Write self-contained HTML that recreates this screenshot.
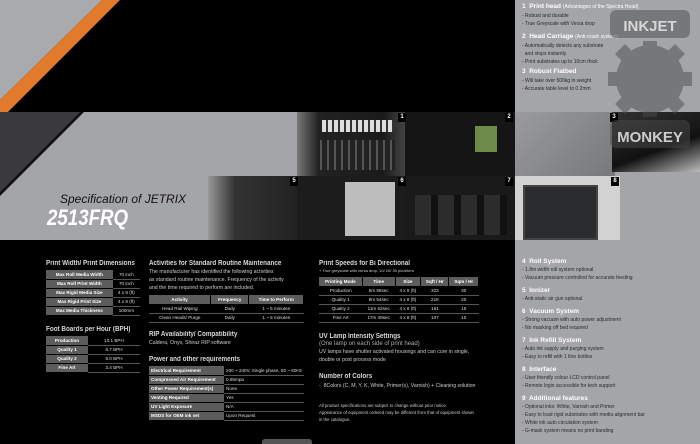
<!DOCTYPE html>
<html><head><meta charset="utf-8"><style>
*{margin:0;padding:0;box-sizing:border-box}
body{width:700px;height:444px;overflow:hidden;background:#000;font-family:"Liberation Sans",sans-serif;position:relative;color:#ddd}
.a{position:absolute}
.t{position:absolute;font-weight:bold;color:#d8d8d8;font-size:7px;white-space:nowrap;transform:scaleX(.9);transform-origin:left}
.s{position:absolute;font-size:5.2px;color:#ccc;white-space:nowrap;line-height:8px}
table{position:absolute;border-collapse:collapse;font-size:4.6px;color:#ddd}
td{height:9px;text-align:center;border-bottom:1px solid #555;padding:0 2px;white-space:nowrap}
td.l{background:#5c5c5c;color:#fff;font-weight:bold;border-bottom:1px solid #000}
th{background:#5c5c5c;color:#fff;font-weight:bold;height:9px;border-right:1px solid #000;padding:0 2px}
.r{position:absolute;left:522px;font-size:5px;color:#2a2a2a;white-space:nowrap;line-height:8px}
.rh{position:absolute;left:522px;font-size:6.5px;color:#fff;font-weight:bold;white-space:nowrap}
.rh span{font-weight:normal;font-size:5px}
.n{position:absolute;background:#000;color:#fff;font-size:6px;font-weight:bold;width:8px;height:9px;text-align:center;line-height:9px}
</style></head><body>
<svg class="a" style="left:0;top:0" width="515" height="240">
<polygon points="0,0 102,0 0,100" fill="#a9aaae"/>
<polygon points="102,0 120,0 8,112 0,112 0,100" fill="#e27a2c"/>
<rect x="0" y="112" width="515" height="128" fill="#a4a5a9"/>
<polygon points="0,112 80,112 0,192" fill="#3a3a3c"/>
<polygon points="80,112 84,112 0,196 0,192" fill="#111"/>
</svg>
<div class="a" style="left:297px;top:112px;width:108px;height:64px;background:linear-gradient(90deg,#777,#222 20%,#1a1a1a 80%,#444)"></div>
<div class="a" style="left:322px;top:120px;width:72px;height:12px;background:repeating-linear-gradient(90deg,#ddd 0 4px,#333 4px 6px)"></div>
<div class="a" style="left:320px;top:140px;width:75px;height:30px;background:repeating-linear-gradient(90deg,#555 0 2px,#222 2px 7px)"></div>
<div class="a" style="left:405px;top:112px;width:110px;height:64px;background:#151515"></div>
<div class="a" style="left:475px;top:126px;width:22px;height:26px;background:#6e8a4a"></div>
<div class="a" style="left:208px;top:176px;width:89px;height:64px;background:linear-gradient(90deg,#999,#333 30%,#222)"></div>
<div class="a" style="left:297px;top:176px;width:108px;height:64px;background:#1c1c1c"></div>
<div class="a" style="left:345px;top:182px;width:50px;height:54px;background:#bdbdbd"></div>
<div class="a" style="left:405px;top:176px;width:110px;height:64px;background:#1a1a1a"></div>
<div class="a" style="left:415px;top:195px;width:92px;height:40px;background:repeating-linear-gradient(90deg,#2c2c2c 0 16px,#111 16px 23px)"></div>
<div class="n" style="left:398px;top:113px">1</div><div class="n" style="left:505px;top:113px">2</div>
<div class="n" style="left:290px;top:177px">5</div><div class="n" style="left:398px;top:177px">6</div><div class="n" style="left:505px;top:177px">7</div>
<div class="a" style="left:60px;top:192px;font-size:12px;font-style:italic;color:#111">Specification of JETRIX</div>
<div class="a" style="left:47px;top:205px;font-size:22px;font-style:italic;font-weight:bold;color:#fff;transform:scaleX(.85);transform-origin:left">2513FRQ</div>
<!-- right column -->
<div class="a" style="left:515px;top:0;width:185px;height:444px;background:#a4a5a9"></div>
<div class="a" style="left:515px;top:112px;width:100px;height:64px;background:linear-gradient(135deg,#9a9b9f,#77787c)"></div>
<div class="a" style="left:612px;top:112px;width:88px;height:60px;background:linear-gradient(160deg,#333,#111 60%,#bbb)"></div>
<div class="a" style="left:515px;top:176px;width:105px;height:64px;background:#d2d2d2"></div>
<div class="a" style="left:523px;top:185px;width:75px;height:55px;background:#2a2c30;border:2px solid #444"></div>
<div class="n" style="left:610px;top:113px">3</div><div class="n" style="left:611px;top:177px">8</div>
<div class="rh" style="top:3px">1&nbsp; Print head <span>(Advantages of the Spectra Head)</span></div>
<div class="r" style="top:12px">- Robust and durable<br>- True Greyscale with Versa drop</div>
<div class="rh" style="top:33px">2&nbsp; Head Carriage <span>(Anti-crash system)</span></div>
<div class="r" style="top:42px">- Automatically detects any substrate<br>&nbsp; and stops instantly<br>- Print substrates up to 10cm thick</div>
<div class="rh" style="top:68px">3&nbsp; Robust Flatbed</div>
<div class="r" style="top:77px">- Will take over 500kg in weight<br>- Accurate table level to 0.2mm</div>
<svg class="a" style="left:600px;top:5px" width="100" height="145">
<g fill="#4a4a4a" opacity=".5">
<rect x="10" y="5" width="80" height="28" rx="6"/>
<rect x="10" y="115" width="80" height="28" rx="6"/>
<circle cx="50" cy="74" r="34"/>
<g stroke="#4a4a4a" stroke-width="14"><line x1="50" y1="36" x2="50" y2="112"/><line x1="8" y1="74" x2="92" y2="74"/><line x1="20" y1="44" x2="80" y2="104"/><line x1="80" y1="44" x2="20" y2="104"/></g>
</g>
<text x="50" y="26" font-size="15" font-weight="bold" fill="#e8e8e8" fill-opacity=".85" text-anchor="middle" font-family="Liberation Sans">INKJET</text>
<text x="50" y="137" font-size="15" font-weight="bold" fill="#e8e8e8" fill-opacity=".85" text-anchor="middle" font-family="Liberation Sans">MONKEY</text>
</svg>
<div class="rh" style="top:258px">4&nbsp; Roll System</div>
<div class="r" style="top:266px">- 1.8m width roll system optional<br>- Vacuum pressure controlled for accurate feeding</div>
<div class="rh" style="top:287px">5&nbsp; Ionizer</div>
<div class="r" style="top:295px">- Anti-static air gun optional</div>
<div class="rh" style="top:308px">6&nbsp; Vacuum System</div>
<div class="r" style="top:316px">- Strong vacuum with auto power adjustment<br>- No masking off bed required</div>
<div class="rh" style="top:337px">7&nbsp; Ink Refill System</div>
<div class="r" style="top:345px">- Auto ink supply and purging system<br>- Easy to refill with 1 litre bottles</div>
<div class="rh" style="top:366px">8&nbsp; Interface</div>
<div class="r" style="top:374px">- User friendly colour LCD control panel<br>- Remote login accessible for tech support</div>
<div class="rh" style="top:395px">9&nbsp; Additional features</div>
<div class="r" style="top:403px">- Optional inks: White, Varnish and Primer<br>- Easy to load rigid substrates with media alignment bar<br>- White ink auto circulation system<br>- G-mask system means no print banding</div>
<!-- bottom col1 -->
<div class="t" style="left:46px;top:260px">Print Width/ Print Dimensions</div>
<table style="left:46px;top:270px;width:94px"><tr><td class="l">Max Roll Media Width</td><td>70 inch</td></tr><tr><td class="l">Max Roll Print Width</td><td>70 inch</td></tr><tr><td class="l">Max Rigid Media Size</td><td>4 x 8 (ft)</td></tr><tr><td class="l">Max Rigid Print Size</td><td>4 x 8 (ft)</td></tr><tr><td class="l">Max Media Thickness</td><td>100mm</td></tr></table>
<div class="t" style="left:46px;top:326px">Foot Boards per Hour (BPH)</div>
<table style="left:46px;top:336px;width:94px"><tr><td class="l" style="width:42px">Production</td><td>10.1 BPH</td></tr><tr><td class="l">Quality 1</td><td>6.7 BPH</td></tr><tr><td class="l">Quality 2</td><td>5.0 BPH</td></tr><tr><td class="l">Fine Art</td><td>3.4 BPH</td></tr></table>
<!-- col2 -->
<div class="t" style="left:149px;top:260px">Activities for Standard Routine Maintenance</div>
<div class="s" style="left:149px;top:268px">The manufacturer has identified the following activities<br>as standard routine maintenance. Frequency of the activity<br>and the time required to perform are included.</div>
<table style="left:149px;top:295px;width:155px"><tr><th>Activity</th><th>Frequency</th><th>Time to Perform</th></tr><tr><td>Head Rail Wiping</td><td>Daily</td><td>1 ~ 5 minutes</td></tr><tr><td>Clean Heads/ Purge</td><td>Daily</td><td>1 ~ 5 minutes</td></tr></table>
<div class="t" style="left:149px;top:331px">RIP Availability/ Compatibility</div>
<div class="s" style="left:149px;top:339px">Caldera, Onyx, Shiraz RIP software</div>
<div class="t" style="left:149px;top:356px">Power and other requirements</div>
<table style="left:149px;top:366px;width:155px"><tr><td class="l" style="text-align:left;width:77px">Electrical Requirement</td><td style="text-align:left">200 ~ 240V, Single phase, 50 ~ 60Hz</td></tr><tr><td class="l" style="text-align:left">Compressed Air Requirement</td><td style="text-align:left">0.65mpa</td></tr><tr><td class="l" style="text-align:left">Other Power Requirement(s)</td><td style="text-align:left">None</td></tr><tr><td class="l" style="text-align:left">Venting Required</td><td style="text-align:left">Yes</td></tr><tr><td class="l" style="text-align:left">UV Light Exposure</td><td style="text-align:left">N/A</td></tr><tr><td class="l" style="text-align:left">MSDS for OEM ink set</td><td style="text-align:left">Upon Request</td></tr></table>
<!-- col3 -->
<div class="t" style="left:319px;top:260px">Print Speeds for Bi Directional</div>
<div class="s" style="left:319px;top:267px;font-size:4px">+ True greyscale with versa drop, 10/ 20/ 30 picoliters</div>
<table style="left:319px;top:277px;width:160px"><tr><th>Printing Mode</th><th>Time</th><th>Size</th><th>Sqft / Hr</th><th>Sqm / Hr</th></tr><tr><td>Production</td><td>5m 56sec</td><td>4 x 8 (ft)</td><td>323</td><td>30</td></tr><tr><td>Quality 1</td><td>8m 54sec</td><td>4 x 8 (ft)</td><td>215</td><td>20</td></tr><tr><td>Quality 2</td><td>11m 52sec</td><td>4 x 8 (ft)</td><td>161</td><td>15</td></tr><tr><td>Fine Art</td><td>17m 48sec</td><td>4 x 8 (ft)</td><td>107</td><td>10</td></tr></table>
<div class="t" style="left:319px;top:333px">UV Lamp Intensity Settings</div>
<div class="s" style="left:319px;top:340px;font-size:6px;color:#aaa">(One lamp on each side of print head)</div>
<div class="s" style="left:319px;top:348px">UV lamps have shutter activated housings and can cure in single,<br>double or post process mode</div>
<div class="t" style="left:319px;top:373px">Number of Colors</div>
<div class="s" style="left:319px;top:382px">- &nbsp;8Colors (C, M, Y, K, White, Primer(s), Varnish) + Cleaning solution</div>
<div class="s" style="left:319px;top:402px;font-size:4.3px;line-height:7px">All product specifications are subject to change without prior notice.<br>Appearance of equipment ordered may be different from that of equipment shown<br>in the catalogue.</div>
<div class="a" style="left:262px;top:439px;width:50px;height:5px;background:#555;border-radius:3px 3px 0 0"></div>
</body></html>
